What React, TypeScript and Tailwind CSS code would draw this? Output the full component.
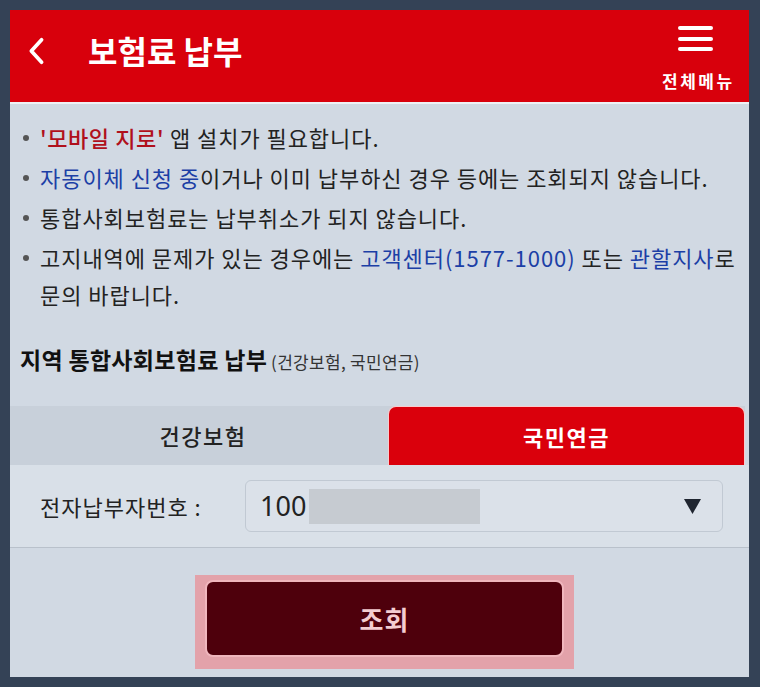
export default function App() {
  const font = { fontFamily: '"Noto Sans CJK KR", "Noto Sans", sans-serif' }

  return (
    <div className="w-[760px] h-[687px] bg-[#344256] pt-[10px] pl-[10px]" style={font}>
      <div className="w-[739px] h-[667px] bg-[#d1d9e3] flex flex-col overflow-hidden">
        {/* Header */}
        <header className="h-[94px] shrink-0 bg-[#d8000c] border-b-2 border-[#eef1f5] relative">
          <svg viewBox="0 0 20 30" className="absolute left-[16px] top-[27px] w-[20px] h-[28px]" fill="none" stroke="white" strokeWidth={4} strokeLinecap="round" strokeLinejoin="round">
            <path d="M16 3 L5 15 L16 27" />
          </svg>
          <h1 className="absolute left-[78px] top-[17px] text-[32px] leading-[46px] font-bold text-white">
            보험료 납부
          </h1>
          <div className="absolute left-[668px] top-[16px] flex flex-col gap-[6.5px]">
            <span className="block w-[35px] h-[4px] rounded-full bg-white" />
            <span className="block w-[35px] h-[4px] rounded-full bg-white" />
            <span className="block w-[35px] h-[4px] rounded-full bg-white" />
          </div>
          <span className="absolute left-[652px] top-[60px] text-[17px] leading-[22px] font-bold text-white tracking-[2.5px]">
            전체메뉴
          </span>
        </header>

        {/* Notices */}
        <ul className="pt-[15px] pl-[30px] pr-[2px] flex flex-col gap-[3px] text-[22px] leading-[37px] text-[#222] tracking-[0.95px]">
          <li className="relative">
            <span className="absolute -left-[17px] top-[16px] w-[6px] h-[6px] rounded-full bg-[#555]" />
            <span className="text-[#b0101c] font-medium tracking-[0.6px]">'모바일 지로'</span> 앱 설치가 필요합니다.
          </li>
          <li className="relative">
            <span className="absolute -left-[17px] top-[16px] w-[6px] h-[6px] rounded-full bg-[#555]" />
            <span className="text-[#1c3fa6]">자동이체 신청 중</span>이거나 이미 납부하신 경우 등에는 조회되지 않습니다.
          </li>
          <li className="relative">
            <span className="absolute -left-[17px] top-[16px] w-[6px] h-[6px] rounded-full bg-[#555]" />
            통합사회보험료는 납부취소가 되지 않습니다.
          </li>
          <li className="relative">
            <span className="absolute -left-[17px] top-[16px] w-[6px] h-[6px] rounded-full bg-[#555]" />
            고지내역에 문제가 있는 경우에는 <span className="text-[#1c3fa6]">고객센터(1577-1000)</span> 또는{' '}
            <span className="text-[#1c3fa6]">관할지사</span>로
            <br />
            문의 바랍니다.
          </li>
        </ul>

        {/* Section heading */}
        <div className="mt-[31px] pl-[10px] flex items-baseline gap-[4px] text-[#111]">
          <span className="text-[23px] leading-[30px] font-bold tracking-[0.3px]">지역 통합사회보험료 납부</span>
          <span className="text-[17px] leading-[30px] text-[#333] tracking-[0.3px]">(건강보험, 국민연금)</span>
        </div>

        {/* Tabs */}
        <div className="mt-[29px] flex h-[59px] bg-[#c8d0da]">
          <div className="w-[378px] pl-[8px] flex items-center justify-center text-[22px] text-[#222] font-medium tracking-[1.5px]">
            건강보험
          </div>
          <div className="w-[357px] rounded-t-lg bg-[#da000c] border border-b-0 border-white/80 flex items-center justify-center text-[22px] text-white font-bold tracking-[1.5px]">
            국민연금
          </div>
          <div className="flex-1 bg-[#d1d9e3]" />
        </div>

        {/* Form row */}
        <div className="h-[83px] bg-[#d9e0e8] border-b border-[#b9c1cb] flex items-center pl-[30px] pr-[26px]">
          <span className="w-[205px] text-[22px] text-[#222] tracking-[1px]">전자납부자번호 :</span>
          <div className="flex-1 h-[52px] rounded-md border border-[#c1c9d3] bg-[#dbe1e9] flex items-center pl-[14px] pr-[20px]">
            <span className="text-[27px] leading-[30px] text-[#222]" style={{ fontFamily: '"Noto Sans", sans-serif' }}>100</span>
            <span className="ml-[3px] w-[171px] h-[35px] bg-[#c6cbd1]" />
            <svg viewBox="0 0 20 18" className="ml-auto w-[19px] h-[17px]">
              <path d="M1 1 L19 1 L10 17 Z" fill="#1f2530" />
            </svg>
          </div>
        </div>

        {/* Submit */}
        <div className="flex justify-center pt-[27px] pl-[10px]">
          <div className="w-[379px] h-[94px] bg-[#e3a2aa] px-[10px] pt-[5px]">
            <button className="w-full h-[77px] rounded-lg bg-[#4e000c] border-2 border-[#f0b6bd] text-[#f3cdd1] text-[26px] font-bold tracking-[1px]">
              조회
            </button>
          </div>
        </div>
      </div>
    </div>
  )
}
